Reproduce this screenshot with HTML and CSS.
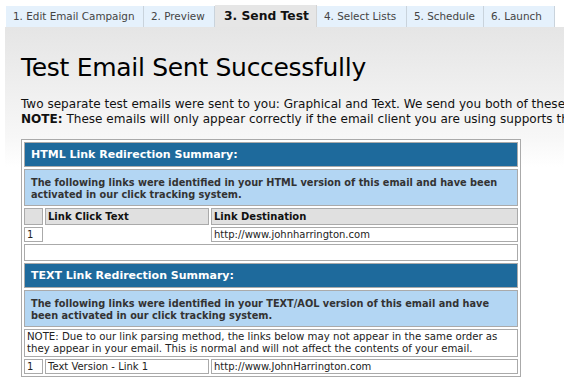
FILE: index.html
```html
<!DOCTYPE html>
<html lang="en">
<head>
  <meta charset="UTF-8">
  <title>Send Test</title>
  <link rel="stylesheet" href="styles.css">
</head>
<body>
  <ul class="tabs">
    <li>1. Edit Email Campaign</li>
    <li>2. Preview</li>
    <li class="active">3. Send Test</li>
    <li>4. Select Lists</li>
    <li>5. Schedule</li>
    <li>6. Launch</li>
  </ul>

  <div class="content">
    <h1>Test Email Sent Successfully</h1>
    <p class="intro">
      Two separate test emails were sent to you: Graphical and Text. We send you both of these versions so you can see how they look.<br>
      <strong>NOTE:</strong> These emails will only appear correctly if the email client you are using supports them.
    </p>

    <table class="summary">
      <tr><td colspan="3" class="title">HTML Link Redirection Summary:</td></tr>
      <tr><td colspan="3" class="desc">The following links were identified in your HTML version of this email and have been<br>activated in our click tracking system.</td></tr>
      <tr class="head">
        <td class="num"></td>
        <td class="text">Link Click Text</td>
        <td>Link Destination</td>
      </tr>
      <tr>
        <td class="num">1</td>
        <td class="blank"></td>
        <td>http://www.johnharrington.com</td>
      </tr>
      <tr><td colspan="3" class="spacer">&nbsp;</td></tr>
      <tr><td colspan="3" class="title">TEXT Link Redirection Summary:</td></tr>
      <tr><td colspan="3" class="desc">The following links were identified in your TEXT/AOL version of this email and have<br>been activated in our click tracking system.</td></tr>
      <tr><td colspan="3" class="note">NOTE: Due to our link parsing method, the links below may not appear in the same order as<br>they appear in your email. This is normal and will not affect the contents of your email.</td></tr>
      <tr>
        <td class="num">1</td>
        <td class="text">Text Version - Link 1</td>
        <td>http://www.JohnHarrington.com</td>
      </tr>
    </table>
  </div>
</body>
</html>
```

FILE: styles.css
```css
* {
  box-sizing: border-box;
}

body {
  margin: 0;
  font-family: "DejaVu Sans", Verdana, sans-serif;
  color: #111;
  background: #fff;
  overflow: hidden;
}

.tabs {
  display: flex;
  list-style: none;
  margin: 0;
  padding: 6px 0 0 6px;
  white-space: nowrap;
}

.tabs li {
  flex-shrink: 0;
  height: 21px;
  padding: 4px 7px 0;
  font-size: 10.4px;
  color: #444;
  background: #e5f1fc;
  border-right: 1px solid #c9d3dc;
}

.tabs li:nth-child(1) { width: 138px; }
.tabs li:nth-child(2) { width: 71px; }
.tabs li:nth-child(4) { width: 90px; }
.tabs li:nth-child(5) { width: 77px; }
.tabs li:nth-child(6) { width: 71px; }

.tabs li.active {
  width: 102px;
  height: 22px;
  margin-top: -1px;
  padding: 4px 0 0 9px;
  font-size: 12.3px;
  font-weight: bold;
  color: #111;
  background: #e6e6e6;
  border-right: 1px solid #d4d4d4;
}

.content {
  margin-left: 5px;
  padding: 26px 0 0 16px;
  background: linear-gradient(#e5e5e5, #f7f7f7 110px, #fff 140px);
  height: 360px;
}

h1 {
  margin: 0 0 15px;
  font-size: 25px;
  line-height: 29px;
  font-weight: normal;
  letter-spacing: -0.3px;
  color: #000;
}

.intro {
  margin: 0 0 12px;
  font-size: 12.05px;
  line-height: 15px;
  white-space: nowrap;
}

.summary {
  width: 500px;
  border: 1px solid #aaa;
  border-spacing: 2px;
  background: #fff;
  font-size: 10px;
}

.summary td {
  border: 1px solid #aaa;
  padding: 0 2px;
  line-height: 12px;
  color: #222;
  white-space: nowrap;
}

.summary tr td {
  height: 15px;
}

.summary .title {
  height: 25px;
  padding: 0 6px;
  background: #1e6a9c;
  color: #fff;
  font-size: 11px;
  font-weight: bold;
}

.summary .desc {
  height: 36px;
  padding: 7px 6px 4px;
  vertical-align: top;
  background: #b3d6f3;
  color: #333;
  font-size: 9.75px;
  font-weight: bold;
}

.summary .head td {
  height: 17px;
  background: #e0e0e0;
  font-weight: bold;
  color: #111;
}

.summary .num {
  width: 19px;
}

.summary .text {
  width: 164px;
}

.summary .blank {
  border-color: transparent;
}

.summary .spacer {
  height: 17px;
}

.summary .note {
  height: 28px;
  font-size: 10.2px;
}
```
